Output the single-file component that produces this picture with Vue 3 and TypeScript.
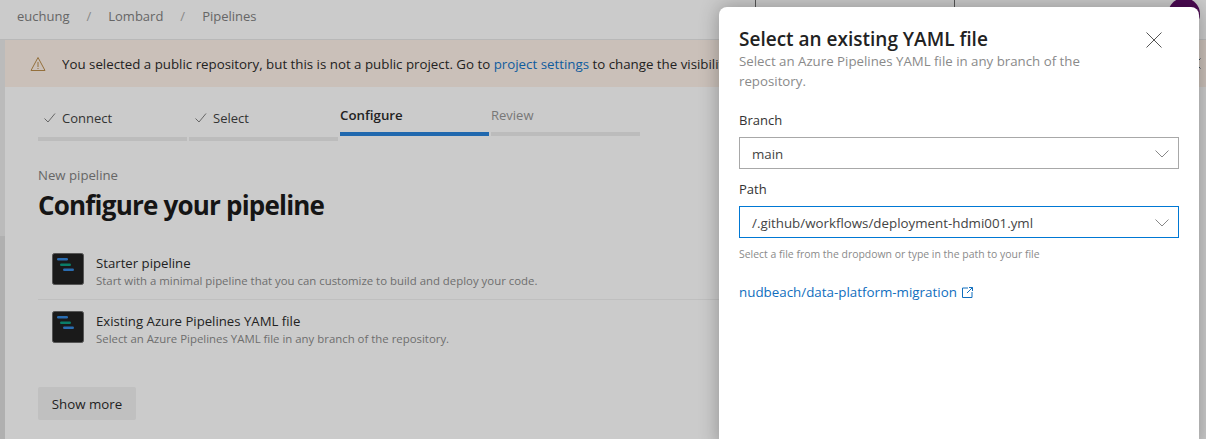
<script setup lang="ts">
const steps = [
  { label: 'Connect', state: 'done' },
  { label: 'Select', state: 'done' },
  { label: 'Configure', state: 'active' },
  { label: 'Review', state: 'todo' },
]
const options = [
  { title: 'Starter pipeline', text: 'Start with a minimal pipeline that you can customize to build and deploy your code.' },
  { title: 'Existing Azure Pipelines YAML file', text: 'Select an Azure Pipelines YAML file in any branch of the repository.' },
]
</script>

<template>
  <div class="page">
    <header class="topbar">
      <span>euchung</span><i>/</i><span>Lombard</span><i>/</i><span>Pipelines</span>
      <span class="searchbox"></span>
      <span class="avatar"></span>
    </header>
    <div class="body">
      <aside class="rail"></aside>
      <main class="main">
        <div class="banner">
          <svg class="warn" width="16" height="16" viewBox="0 0 16 16" fill="none" stroke="#94703c" stroke-width="1">
            <path d="M8 1.500 15 14.500H1Z" />
            <path d="M8 6v5M8 12v1" />
          </svg>
          <span class="banner-text">You selected a public repository, but this is not a public project. Go to <a>project settings</a> to change the visibility of this project.</span>
          <svg class="banner-x" width="11" height="11" viewBox="0 0 11 11" stroke="#3a4a58" stroke-width="1"><path d="M.5.5l10 10M10.500.5l-10 10" /></svg>
        </div>
        <div class="content">
          <div class="steps">
            <div v-for="s in steps" :key="s.label" class="step" :class="s.state">
              <div class="step-label">
                <svg v-if="s.state === 'done'" width="14" height="12" viewBox="0 0 14 12" fill="none" stroke="#666" stroke-width="1"><path d="M1.500 6.500 5 10 12 1.500" /></svg>
                {{ s.label }}
              </div>
              <div class="step-bar"></div>
            </div>
          </div>
          <div class="crumb">New pipeline</div>
          <h1>Configure your pipeline</h1>
          <div class="options">
            <div v-for="o in options" :key="o.title" class="option">
              <svg class="tile" width="32" height="32" viewBox="0 0 32 32">
                <rect x=".5" y=".5" width="31" height="31" rx="2" fill="#1a1a1a" stroke="#555" />
                <rect x="5" y="5" width="11" height="2.400" rx="1.200" fill="#2a6cb0" />
                <rect x="8" y="10.500" width="11" height="2.400" rx="1.200" fill="#0a7d68" />
                <rect x="11" y="15.500" width="11" height="2.400" rx="1.200" fill="#2a6cb0" />
              </svg>
              <div class="opt-body">
                <div class="opt-title">{{ o.title }}</div>
                <div class="opt-text">{{ o.text }}</div>
              </div>
            </div>
          </div>
          <button class="more">Show more</button>
        </div>
      </main>
    </div>

    <section class="panel">
      <div class="panel-head">
        <div>
          <h2>Select an existing YAML file</h2>
          <p>Select an Azure Pipelines YAML file in any branch of the repository.</p>
        </div>
        <svg class="close" width="16" height="16" viewBox="0 0 16 16" stroke="#555" stroke-width="1"><path d="M.5.5l15 15M15.500.5l-15 15" /></svg>
      </div>
      <label class="first">Branch</label>
      <div class="select"><span>main</span><svg width="14" height="8" viewBox="0 0 14 8" fill="none" stroke="#888"><path d="M.5.500l6.500 6.500 6.500-6.500" /></svg></div>
      <label>Path</label>
      <div class="select focus"><span>/.github/workflows/deployment-hdmi001.yml</span><svg width="14" height="8" viewBox="0 0 14 8" fill="none" stroke="#888"><path d="M.5.500l6.500 6.500 6.500-6.500" /></svg></div>
      <div class="hint">Select a file from the dropdown or type in the path to your file</div>
      <a class="repo">nudbeach/data-platform-migration
        <svg width="11" height="11" viewBox="0 0 11 11" fill="none" stroke="#106ebe"><path d="M6 1H.5v9.500h9.500V5M5 6l5.500-5.500M7 .5h3.500V4" /></svg>
      </a>
    </section>
  </div>
</template>

<style>
html, body { margin: 0; background: #cbcbcb; overflow: hidden; }
</style>

<style scoped>
.page { position: relative; width: 1206px; height: 439px; overflow: hidden; background: #cbcbcb; font-family: "Open Sans", "Noto Sans", sans-serif; font-size: 13px; color: #222; }
.topbar { height: 39px; box-sizing: content-box; border-bottom: 1px solid #b8b8b8; display: flex; align-items: center; padding: 0 0 0 17px; color: #666; font-size: 13px; position: relative; }
.topbar > span:not(.avatar):not(.searchbox) { position: relative; top: -4px; }
.topbar i { font-style: normal; margin: 0 17px; color: #888; position: relative; top: -4px; }
.searchbox { position: absolute; left: 755px; top: -20px; width: 198px; height: 40px; border: 1px solid #555; }
.avatar { position: absolute; left: 1168px; top: -2px; width: 32px; height: 32px; border-radius: 50%; background: #4b0a52; }
.body { display: flex; height: 399px; }
.rail { width: 5px; background: linear-gradient(#bbbbbb 196px, #b0b0b0 196px); flex: none; }
.main { flex: 1; min-width: 0; }
.banner { height: 47px; background: #cac0b9; display: flex; align-items: center; padding-left: 25px; white-space: nowrap; overflow: hidden; color: #222; font-size: 13.300px; position: relative; }
.warn { margin-right: 16px; flex: none; }
.banner-text { width: 657px; flex: none; overflow: hidden; }
.banner-x { position: absolute; left: 1185px; top: 18px; }
.banner a { color: #0f5c9e; }
.content { padding: 0 0 0 33px; }
.steps { display: flex; gap: 2px; padding-top: 16px; height: 38px; }
.step { width: 149px; display: flex; flex-direction: column; }
.step-label { height: 24px; margin-bottom: 5px; display: flex; align-items: center; gap: 5px; flex: none; }
.step.done .step-label { padding-left: 5px; box-sizing: border-box; height: 30px; margin-bottom: 4px; color: #333; }
.step-bar { height: 4px; background: #bcbcbc; flex: none; }
.step.active .step-label { font-weight: 600; color: #222; font-size: 13.300px; }
.step.active .step-bar { background: #2068ae; }
.step.todo .step-label { color: #777; }
.crumb { margin-top: 25px; color: #666; font-size: 13.200px; }
h1 { margin: 4px 0 0; font-size: 26px; line-height: 34px; font-weight: 700; color: #151515; letter-spacing: -0.800px; }
.options { margin-top: 20px; width: 690px; }
.option { display: flex; align-items: center; gap: 12px; height: 58px; padding: 0 0 3px 14px; box-sizing: border-box; border-bottom: 1px solid #bfbfbf; }
.option:last-child { border-bottom-color: transparent; }
.tile { flex: none; }
.opt-body { padding-top: 6px; }
.opt-title { color: #222; line-height: 18px; font-size: 13.200px; }
.opt-text { font-size: 11.400px; color: #6e6e6e; line-height: 18px; }
.more { margin-top: 29px; display: block; height: 33px; width: 98px; border: 0; border-radius: 2px; background: #c0c0c0; font: inherit; font-size: 13.300px; color: #222; padding: 0; }
.panel { position: absolute; left: 719px; top: 7px; width: 480px; height: 440px; box-sizing: border-box; padding: 20px 20px 0; background: #fff; border-radius: 8px 8px 0 0; box-shadow: 0 0 20px rgba(0,0,0,.3); }
.panel-head { display: flex; justify-content: space-between; align-items: flex-start; }
.panel-head > div { width: 370px; }
h2 { margin: 0; font-size: 19px; line-height: 24px; font-weight: 600; color: #222; }
p { margin: 0; color: #8a8a8a; line-height: 20px; font-size: 13.270px; }
.close { margin: 5px 17px 0 0; flex: none; }
label { display: block; color: #333; line-height: 18px; margin: 11px 0 8px; }
label.first { margin-top: 20px; }
.select { height: 32px; box-sizing: border-box; border: 1px solid #a8a8a8; display: flex; align-items: center; justify-content: space-between; padding: 1px 9px 0 12px; color: #444; font-size: 13.330px; }
.select.focus { border-color: #0078d4; }
.hint { font-size: 10.450px; color: #8a8a8a; margin-top: 9px; line-height: 14px; }
.repo { display: flex; align-items: center; gap: 5px; margin-top: 22px; color: #106ebe; font-size: 13.370px; line-height: 18px; }
</style>
